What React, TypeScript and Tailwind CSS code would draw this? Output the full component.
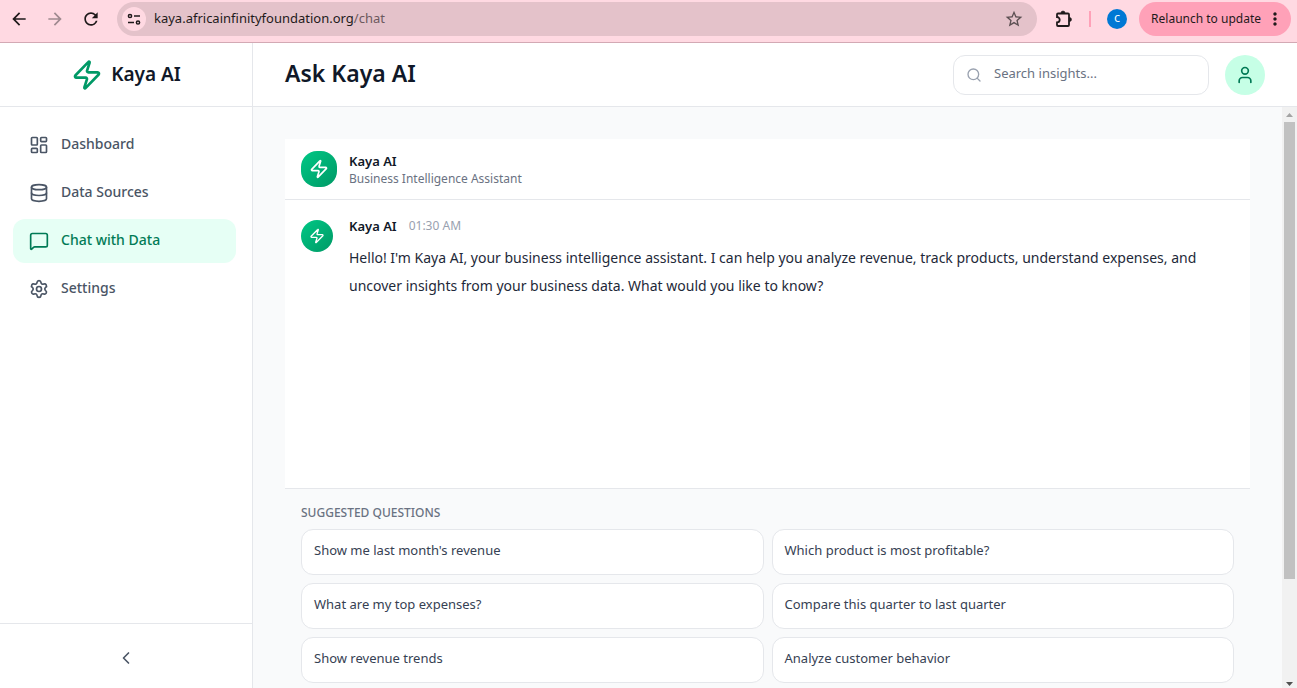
import React, { useState } from 'react';
import {
  ChevronLeft,
  Database,
  LayoutDashboard,
  MessageSquare,
  Search,
  Settings,
  User,
  Zap,
} from 'lucide-react';
import {
  MdArrowBack,
  MdArrowForward,
  MdMoreVert,
  MdRefresh,
  MdStarOutline,
} from 'react-icons/md';

const navItems = [
  { name: 'Dashboard', icon: LayoutDashboard },
  { name: 'Data Sources', icon: Database },
  { name: 'Chat with Data', icon: MessageSquare },
  { name: 'Settings', icon: Settings },
];

const suggestions = [
  "Show me last month's revenue",
  'Which product is most profitable?',
  'What are my top expenses?',
  'Compare this quarter to last quarter',
  'Show revenue trends',
  'Analyze customer behavior',
];

const BrowserBar = () => {
  return (
    <div className="flex shrink-0 items-center border-b border-[#d3a9b4] bg-[#ffd9e2] pt-0.5 pr-1.5 pb-1.5 text-[#1f1a1b]">
      <div className="flex items-center gap-4 pr-4 pl-[9px]">
        <button aria-label="Back">
          <MdArrowBack size={20} />
        </button>
        <button aria-label="Forward" className="text-[#a08a90]">
          <MdArrowForward size={20} />
        </button>
        <button aria-label="Reload">
          <MdRefresh size={20} />
        </button>
      </div>
      <div className="flex h-[34px] flex-1 items-center rounded-full bg-[#e4c2ca] px-[5px]">
        <button
          aria-label="Site information"
          className="flex size-6 items-center justify-center rounded-full bg-[#ffd9e2]"
        >
          <svg width="14" height="14" viewBox="0 0 14 14" fill="none" stroke="currentColor" strokeWidth="1.5">
            <circle cx="3" cy="4" r="1.600" />
            <path d="M7 4h6M1 10.500h6" />
            <circle cx="11" cy="10.500" r="1.600" />
          </svg>
        </button>
        <p className="flex-1 pl-2 text-[13px]">
          kaya.africainfinityfoundation.org<span className="text-[#6d595e]">/chat</span>
        </p>
        <button aria-label="Bookmark" className="px-2 text-[#5c4f52]">
          <MdStarOutline size={20} />
        </button>
      </div>
      <button aria-label="Extensions" className="ml-4">
        <svg width="20" height="20" viewBox="0 0 20 20" fill="none" stroke="currentColor" strokeWidth="1.8">
          <path d="M5 4.500h10a1 1 0 0 1 1 1v10.500a1 1 0 0 1-1 1H5a1 1 0 0 1-1-1V13.400a2.700 2.700 0 0 0 0-5.400V5.500a1 1 0 0 1 1-1z" />
          <path
            d="M8 4a2 2 0 0 1 4 0zM16.500 8.500a2 2 0 0 1 0 4z"
            fill="currentColor"
            strokeWidth="0.6"
          />
        </svg>
      </button>
      <span className="mx-4 h-4 w-0.5 bg-[#ffa1b8]" />
      <span className="flex size-5 items-center justify-center rounded-full bg-[#0078d4] text-[9px] font-medium text-white">
        C
      </span>
      <button className="ml-3 flex h-[34px] items-center gap-1 rounded-full bg-[#ffa1b8] pr-1.5 pl-3 text-xs">
        Relaunch to update
        <MdMoreVert size={20} />
      </button>
    </div>
  );
};

const Sidebar = ({ active, setActive }: { active: string; setActive: (name: string) => void }) => {
  return (
    <aside className="flex w-[253px] shrink-0 flex-col border-r border-gray-200 bg-white">
      <div className="flex h-16 items-center justify-center gap-2 border-b border-gray-200">
        <Zap size={32} className="text-emerald-600" />
        <span className="text-[19px] font-semibold text-gray-900">Kaya AI</span>
      </div>
      <nav className="flex flex-1 flex-col gap-1 py-4 pr-4 pl-[13px]">
        {navItems.map(({ name, icon: Icon }) => (
          <a
            key={name}
            href="#"
            onClick={() => setActive(name)}
            className={
              name === active
                ? 'flex h-11 items-center gap-3 rounded-xl bg-[#e6fff5] px-4 text-sm font-medium text-emerald-700'
                : 'flex h-11 items-center gap-3 rounded-xl px-4 text-sm font-medium text-gray-600'
            }
          >
            <Icon size={20} />
            <span className="pb-0.5">{name}</span>
          </a>
        ))}
      </nav>
      <div className="flex h-[65px] items-center justify-center border-t border-gray-200 pt-1">
        <button aria-label="Collapse sidebar" className="text-gray-600">
          <ChevronLeft size={20} />
        </button>
      </div>
    </aside>
  );
};

const Header = () => {
  return (
    <header className="flex h-16 shrink-0 items-center justify-between border-b border-gray-200 bg-white px-8">
      <h1 className="pb-0.5 text-[23px] font-semibold text-gray-900">Ask Kaya AI</h1>
      <div className="flex items-center gap-4">
        <label className="flex h-10 w-64 items-center gap-3 rounded-xl border border-gray-200 px-3">
          <Search size={16} className="shrink-0 text-gray-400" />
          <input
            type="text"
            aria-label="Search insights"
            placeholder="Search insights..."
            className="w-full pb-0.5 text-[13px] outline-none placeholder:text-gray-500"
          />
        </label>
        <button
          aria-label="Account"
          className="flex size-10 items-center justify-center rounded-full bg-[#c6ffe6] text-emerald-700"
        >
          <User size={20} />
        </button>
      </div>
    </header>
  );
};

const Chat = () => {
  return (
    <section className="bg-white">
      <div className="flex items-center gap-3 border-b border-gray-200 px-4 py-3">
        <div className="flex size-9 items-center justify-center rounded-2xl bg-linear-to-br from-[#00c885] to-[#009966] text-white">
          <Zap size={20} />
        </div>
        <div>
          <h2 className="text-[13px] leading-5 font-semibold text-gray-900">Kaya AI</h2>
          <p className="text-xs text-gray-500">Business Intelligence Assistant</p>
        </div>
      </div>
      <div className="flex h-72 gap-4 px-4 py-5">
        <div className="flex size-8 shrink-0 items-center justify-center rounded-full bg-linear-to-br from-[#00c885] to-[#009966] text-white">
          <Zap size={16} />
        </div>
        <div>
          <div className="flex items-center gap-3 pb-3">
            <span className="text-[13px] leading-3 font-semibold text-gray-900">Kaya AI</span>
            <span className="text-xs leading-3 text-gray-400">01:30 AM</span>
          </div>
          <p className="text-sm leading-7 text-gray-800">
            Hello! I'm Kaya AI, your business intelligence assistant. I can help you analyze
            revenue, track products, understand expenses, and uncover insights from your business
            data. What would you like to know?
          </p>
        </div>
      </div>
      <div className="border-t border-gray-200 bg-gray-50 px-4 pt-4">
        <h3 className="pb-2 text-xs font-medium text-gray-500 uppercase">Suggested questions</h3>
        <div className="grid grid-cols-2 gap-2">
          {suggestions.map((text) => (
            <button
              key={text}
              className="h-[46px] rounded-xl border border-gray-200 bg-white px-3 pb-0.5 text-left text-[13px] text-gray-700"
            >
              {text}
            </button>
          ))}
        </div>
      </div>
    </section>
  );
};

// always visible scrollbar at the right of the content
const Scrollbar = () => {
  return (
    <div aria-hidden="true" className="flex w-[15px] shrink-0 flex-col items-center bg-[#f1f1f1]">
      <svg width="15" height="15" viewBox="0 0 15 15" fill="#a3a3a3">
        <path d="M4 10l3.500-4 3.500 4z" />
      </svg>
      <div className="w-full flex-1 px-0.5">
        <div className="h-[83%] bg-[#c1c1c1]" />
      </div>
      <svg width="15" height="15" viewBox="0 0 15 15" fill="#505050">
        <path d="M4 9l3.500 4 3.500-4z" />
      </svg>
    </div>
  );
};

const App = () => {
  const [active, setActive] = useState('Chat with Data');

  return (
    <div className="flex h-screen flex-col overflow-hidden font-['Noto_Sans',sans-serif]">
      <BrowserBar />
      <div className="flex min-h-0 flex-1">
        <Sidebar active={active} setActive={setActive} />
        <div className="flex min-w-0 flex-1 flex-col">
          <Header />
          <div className="flex min-h-0 flex-1 bg-gray-50">
            <main className="flex-1 overflow-hidden p-8">
              <Chat />
            </main>
            <Scrollbar />
          </div>
        </div>
      </div>
    </div>
  );
};

export default App;
